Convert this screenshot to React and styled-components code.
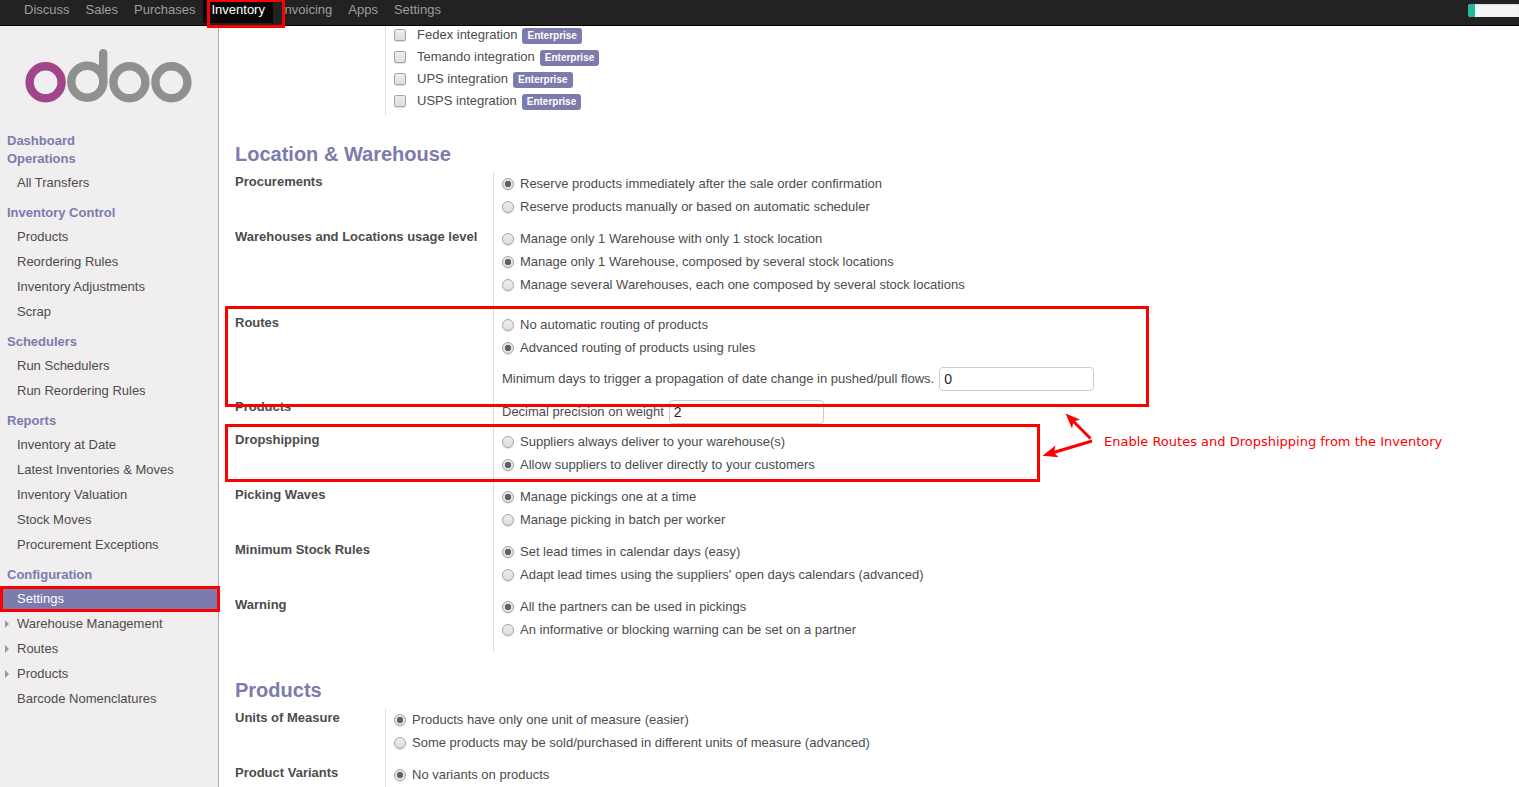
import React from 'react';
import styled, { createGlobalStyle, css } from 'styled-components';

const GlobalStyle = createGlobalStyle`
  *, *::before, *::after { box-sizing: border-box; }
  body {
    margin: 0;
    background: #fff;
    color: #4c4c4c;
    font-family: "Liberation Sans", Arial, sans-serif;
    font-size: 13px;
    line-height: 18px;
  }
`;

const Page = styled.div`
  position: relative;
  display: flex;
  flex-direction: column;
  height: 100vh;
  overflow: hidden;
`;

const TopBar = styled.header`
  display: flex;
  justify-content: space-between;
  flex: none;
  height: 26px;
  background: #222;
  border-bottom: 1px solid #000;
`;

const TopMenu = styled.nav`
  display: flex;
  align-items: flex-start;
  padding-left: 16px;
`;

const TopLink = styled.a`
  height: 23px;
  padding: 0 8px;
  line-height: 19px;
  text-decoration: none;
  color: ${(p) => (p.$active ? '#fff' : '#9d9d9d')};
  background: ${(p) => (p.$active ? '#080808' : 'transparent')};
`;

const Planner = styled.div`
  width: 51px;
  height: 13px;
  margin-top: 4px;
  overflow: hidden;
  border-radius: 3px 0 0 3px;
  background: #f5f5f5;
  box-shadow: inset 0 1px 2px rgba(0, 0, 0, 0.1);
`;

const PlannerFill = styled.div`
  width: 7px;
  height: 100%;
  background: #21b799;
`;

const Body = styled.div`
  display: flex;
  flex: 1;
  min-height: 0;
`;

const Sidebar = styled.aside`
  flex: none;
  width: 219px;
  overflow: hidden;
  background: #f0eeee;
  border-right: 1px solid #afafb6;
`;

const Logo = styled.svg`
  display: block;
  margin: 22px 0 28px 24px;
`;

const MenuTitle = styled.h2`
  margin: 0;
  padding-left: 7px;
  font-size: 13px;
  line-height: 18px;
  color: #7c7bad;
`;

const MenuList = styled.ul`
  margin: 0;
  padding: 2px 0 9px;
  list-style: none;
`;

const MenuLink = styled.a`
  display: flex;
  align-items: center;
  height: 25px;
  padding-left: ${(p) => (p.$parent ? '5px' : '17px')};
  gap: 8px;
  text-decoration: none;
  color: ${(p) => (p.$active ? '#fff' : '#4c4c4c')};
  background: ${(p) => (p.$active ? '#7c7bad' : 'transparent')};
`;

const Caret = styled.span`
  border: 4px solid transparent;
  border-left-color: #999;
  border-right-width: 0;
`;

const Content = styled.main`
  flex: 1;
  min-width: 0;
  padding-left: 16px;
  overflow: hidden;
`;

const SectionTitle = styled.h1`
  margin: 26px 0 6px;
  font-size: 20px;
  line-height: 26px;
  color: #7c7bad;
`;

const Group = styled.div`
  display: grid;
  grid-template-columns: ${(p) => (p.$wide ? '258px' : '150px')} 1fr;
`;

const GroupLabel = styled.div`
  font-weight: bold;
  white-space: nowrap;
`;

const spaceAfter = { small: '7px', normal: '10px', large: '18px' };

const Options = styled.div`
  display: flex;
  flex-direction: column;
  padding: ${(p) => (p.$inset ? '2px' : '0')} 0 ${(p) => spaceAfter[p.$after || 'normal']} 8px;
  border-left: 1px solid #ddd;
`;

const Checks = styled(Options)`
  padding: 0 0 3px 8px;
`;

const CheckRow = styled.div`
  display: flex;
  align-items: center;
  height: 22px;
  &:first-child { margin-top: -2px; }
`;

const CheckLabel = styled.label`
  margin: 0 5px 0 11px;
`;

const Badge = styled.span`
  margin-top: 2px;
  padding: 0 5px;
  border-radius: 3px;
  background: #7c7bad;
  color: #fff;
  font-size: 10px;
  font-weight: bold;
  line-height: 16px;
`;

const RadioRow = styled.label`
  display: flex;
  align-items: center;
  align-self: flex-start;
  height: 22px;
  gap: 6px;
  & + & { margin-top: 1px; }
`;

const control = css`
  appearance: none;
  flex: none;
  width: 12px;
  height: 12px;
  margin: 0;
  border: 1px solid #a6a6a6;
  background: linear-gradient(#ededed, #dedede);
  box-shadow: 0 1px 1px rgba(0, 0, 0, 0.12);
`;

const Checkbox = styled.input.attrs({ type: 'checkbox' })`
  ${control}
  border-radius: 2px;
`;

const Radio = styled.input.attrs({ type: 'radio' })`
  ${control}
  border-radius: 50%;
  &:checked {
    background: radial-gradient(circle, #606060 0 2px, #686868 3px, #e4e4e4 3px);
  }
`;

const FieldRow = styled.div`
  display: flex;
  align-items: center;
  gap: 5px;
  margin-top: ${(p) => (p.$spaced ? '8px' : '0')};
`;

const NumberBox = styled.input.attrs({ type: 'text' })`
  width: 155px;
  height: 24px;
  padding: 0 4px;
  border: 1px solid #ccc;
  border-radius: 4px;
  background: #fff;
  color: #1f1f1f;
  font: 14px "Liberation Sans", Arial, sans-serif;
`;

/* Red notes drawn over the screen. */
const Highlight = styled.div`
  position: absolute;
  left: ${(p) => p.$x}px;
  top: ${(p) => p.$y}px;
  width: ${(p) => p.$w}px;
  height: ${(p) => p.$h}px;
  border: 3px solid #f00;
  pointer-events: none;
`;

const Arrows = styled.svg`
  position: absolute;
  left: 1040px;
  top: 410px;
  pointer-events: none;
`;

const Note = styled.div`
  position: absolute;
  left: 1104px;
  top: 433px;
  color: #f00;
  font-family: "DejaVu Sans", sans-serif;
  font-size: 13px;
  white-space: nowrap;
`;

const topLinks = ['Discuss', 'Sales', 'Purchases', 'Inventory', 'Invoicing', 'Apps', 'Settings'];

const menu = [
  { title: 'Dashboard' },
  { title: 'Operations', items: ['All Transfers'] },
  { title: 'Inventory Control', items: ['Products', 'Reordering Rules', 'Inventory Adjustments', 'Scrap'] },
  { title: 'Schedulers', items: ['Run Schedulers', 'Run Reordering Rules'] },
  {
    title: 'Reports',
    items: ['Inventory at Date', 'Latest Inventories & Moves', 'Inventory Valuation', 'Stock Moves', 'Procurement Exceptions'],
  },
  {
    title: 'Configuration',
    items: ['Settings', 'Warehouse Management', 'Routes', 'Products', 'Barcode Nomenclatures'],
    active: 'Settings',
    parents: ['Warehouse Management', 'Routes', 'Products'],
  },
];

const integrations = ['Fedex', 'Temando', 'UPS', 'USPS'];

const warehouseGroups = [
  {
    label: 'Procurements',
    options: ['Reserve products immediately after the sale order confirmation', 'Reserve products manually or based on automatic scheduler'],
    selected: 0,
  },
  {
    label: 'Warehouses and Locations usage level',
    options: [
      'Manage only 1 Warehouse with only 1 stock location',
      'Manage only 1 Warehouse, composed by several stock locations',
      'Manage several Warehouses, each one composed by several stock locations',
    ],
    selected: 1,
    after: 'large',
  },
  {
    label: 'Routes',
    options: ['No automatic routing of products', 'Advanced routing of products using rules'],
    selected: 1,
    field: { label: 'Minimum days to trigger a propagation of date change in pushed/pull flows.', value: '0' },
    after: 'small',
  },
  { label: 'Products', options: [], field: { label: 'Decimal precision on weight', value: '2' }, after: 'small' },
  {
    label: 'Dropshipping',
    options: ['Suppliers always deliver to your warehouse(s)', 'Allow suppliers to deliver directly to your customers'],
    selected: 1,
  },
  { label: 'Picking Waves', options: ['Manage pickings one at a time', 'Manage picking in batch per worker'], selected: 0 },
  {
    label: 'Minimum Stock Rules',
    options: ['Set lead times in calendar days (easy)', "Adapt lead times using the suppliers' open days calendars (advanced)"],
    selected: 0,
  },
  {
    label: 'Warning',
    options: ['All the partners can be used in pickings', 'An informative or blocking warning can be set on a partner'],
    selected: 0,
  },
];

const productGroups = [
  {
    label: 'Units of Measure',
    options: ['Products have only one unit of measure (easier)', 'Some products may be sold/purchased in different units of measure (advanced)'],
    selected: 0,
  },
  { label: 'Product Variants', options: ['No variants on products'], selected: 0 },
];

function SettingGroup({ id, group, wide }) {
  const { label, options, selected, field, after } = group;
  return (
    <Group $wide={wide} role="group" aria-labelledby={id}>
      <GroupLabel id={id}>{label}</GroupLabel>
      <Options $after={after} $inset={options.length === 0}>
        {options.map((text, i) => (
          <RadioRow key={text}>
            <Radio name={id} defaultChecked={i === selected} />
            {text}
          </RadioRow>
        ))}
        {field && (
          <FieldRow $spaced={options.length > 0}>
            <label htmlFor={`${id}-field`}>{field.label}</label>
            <NumberBox id={`${id}-field`} defaultValue={field.value} />
          </FieldRow>
        )}
      </Options>
    </Group>
  );
}

function OdooLogo() {
  return (
    <Logo width="170" height="56" viewBox="24 48 170 56" role="img" aria-label="odoo">
      <g fill="none" strokeWidth="8.400">
        <circle cx="45.6" cy="82.3" r="16" stroke="#a24689" />
        <g stroke="#8f9190">
          <circle cx="87.3" cy="81.7" r="16" />
          <path d="M103.2 53.2V82" strokeLinecap="round" />
          <circle cx="129.4" cy="82.3" r="16" />
          <circle cx="171.4" cy="82.3" r="16" />
        </g>
      </g>
    </Logo>
  );
}

export default function App() {
  return (
    <Page>
      <GlobalStyle />
      <TopBar>
        <TopMenu>
          {topLinks.map((t) => (
            <TopLink key={t} href="#" $active={t === 'Inventory'}>{t}</TopLink>
          ))}
        </TopMenu>
        <Planner role="progressbar" aria-label="Planner" aria-valuenow={10}>
          <PlannerFill />
        </Planner>
      </TopBar>
      <Body>
        <Sidebar>
          <OdooLogo />
          {menu.map(({ title, items, active, parents = [] }) => (
            <React.Fragment key={title}>
              <MenuTitle>{title}</MenuTitle>
              {items && (
                <MenuList>
                  {items.map((item) => (
                    <li key={item}>
                      <MenuLink href="#" $active={item === active} $parent={parents.includes(item)}>
                        {parents.includes(item) && <Caret />}
                        {item}
                      </MenuLink>
                    </li>
                  ))}
                </MenuList>
              )}
            </React.Fragment>
          ))}
        </Sidebar>
        <Content>
          <Group>
            <div />
            <Checks>
              {integrations.map((name) => (
                <CheckRow key={name}>
                  <Checkbox id={name} />
                  <CheckLabel htmlFor={name}>{name} integration</CheckLabel>
                  <Badge>Enterprise</Badge>
                </CheckRow>
              ))}
            </Checks>
          </Group>
          <SectionTitle>Location &amp; Warehouse</SectionTitle>
          {warehouseGroups.map((g, i) => (
            <SettingGroup key={g.label} id={`warehouse-${i}`} group={g} wide />
          ))}
          <SectionTitle>Products</SectionTitle>
          {productGroups.map((g, i) => (
            <SettingGroup key={g.label} id={`product-${i}`} group={g} />
          ))}
        </Content>
      </Body>
      <Highlight $x={207} $y={-1} $w={78} $h={29} />
      <Highlight $x={0} $y={586} $w={220} $h={26} />
      <Highlight $x={225} $y={306} $w={924} $h={101} />
      <Highlight $x={225} $y={424} $w={815} $h={58} />
      <Arrows width="56" height="52" viewBox="1040 410 56 52" aria-hidden="true">
        <g stroke="#f00" strokeWidth="3" fill="#f00">
          <path d="M1090.500 438.500L1071 419M1092 441L1051 453.200" />
          <path stroke="none" d="M1065.500 413.500L1080 419.500L1073.500 421.500L1072 428.500ZM1042.500 455.700L1055.500 445.500L1054 452.500L1058.500 457.200Z" />
        </g>
      </Arrows>
      <Note>Enable Routes and Dropshipping from the Inventory</Note>
    </Page>
  );
}
